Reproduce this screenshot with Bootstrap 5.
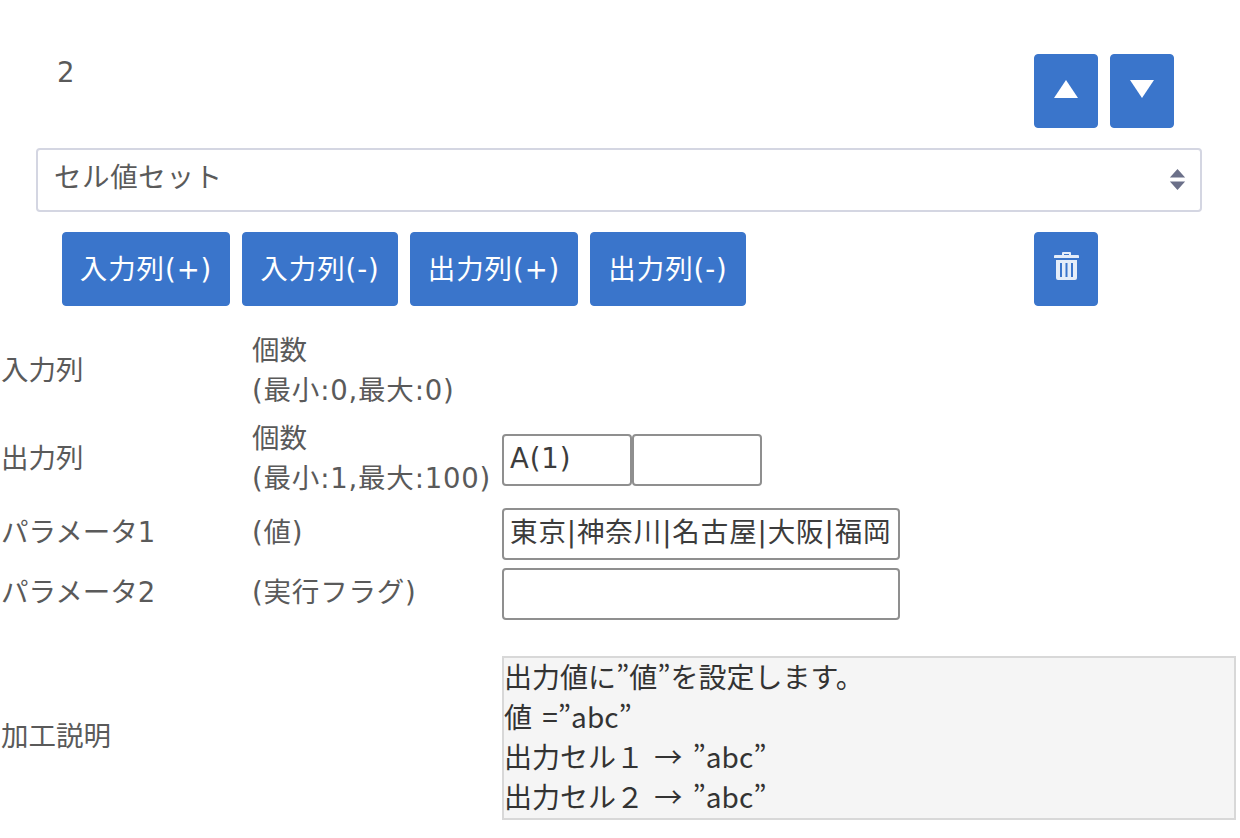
<!DOCTYPE html>
<html lang="ja">
<head>
<meta charset="utf-8">
<title>セル値セット</title>
<link href="https://cdn.jsdelivr.net/npm/bootstrap@5.3.0/dist/css/bootstrap.min.css" rel="stylesheet">
<style>
html,body{margin:0;background:#fff;overflow:hidden}
body{font-family:"DejaVu Sans","Noto Sans CJK JP",sans-serif;font-size:27.5px;line-height:40px;color:#5a5a5a;width:1240px;height:838px}
.sheet{padding-top:54px}
.blue-btn{background:#3a75cb;border:1px solid #3a75cb;color:#fff;border-radius:4px;font-size:27.5px;font-weight:400;letter-spacing:.9px;line-height:40px;height:74px;padding:0;display:flex;align-items:center;justify-content:center;white-space:nowrap}
.blue-btn:hover{background:#3a75cb;color:#fff;border-color:#3a75cb}
.sq-btn{width:64px;padding:0}
.lift-a{padding-bottom:4px}
.lift-b{padding-bottom:6px}
.top-row{padding-left:57px;height:74px;column-gap:962px}
.num{margin-top:-2px;width:15px}
.right-set{column-gap:12px}
.sel-wrap{padding:20px 38px 20px 36px}
.sel-box{height:64px;border:2px solid #d4d6e2;border-radius:4px;color:#5a5a5a;letter-spacing:.6px;padding:0 50px 6px 16px;background-color:#fff;display:flex;align-items:center;position:relative}
.sel-arrows{position:absolute;right:14px;top:19px}
.act-row{padding-left:62px;height:74px}
.act-left{width:972px;column-gap:12px}
.w-plus{width:168px}
.w-minus{width:156px}
.info{display:grid;grid-template-columns:250px 250px 738px;grid-template-rows:80px 80px 52px 52px 194px;padding-left:1px;margin-top:24px;row-gap:8px}
.info>.col-two{padding-left:1px}
.cap{display:flex;align-items:center}
.note{white-space:nowrap}
.wide-txt{letter-spacing:.8px}
.fields{display:flex;align-items:center;padding-left:1px}
.fields-low{align-items:flex-start;padding-top:16px}
.fields-nudge{margin-top:3px}
.fields-nudge2{margin-top:4px}
.fld{height:52px;border:2px solid #8f8f8f;border-radius:4px;color:#3c3c3c;letter-spacing:.9px;line-height:44px;padding:0 6px;background:#fff;white-space:nowrap;overflow:hidden}
.fld-s{width:130px}
.fld-l{width:398px}
.desc-box{width:734px;height:164px;margin-top:30px;margin-left:1px;background:#f5f5f5;border:2px solid #d8d8d8;color:#333;font-size:28px;line-height:40px;padding:0;word-spacing:4px;white-space:nowrap;font-family:"Noto Sans CJK JP",sans-serif}
.desc-lines{margin-top:-2px}
.gap-top{margin-top:26px}
</style>
</head>
<body>
<div class="sheet">
  <div class="top-row d-flex align-items-start">
    <div class="num">2</div>
    <div class="right-set d-flex">
      <button class="btn blue-btn sq-btn lift-a" aria-label="上へ"><svg width="24" height="18" viewBox="0 0 24 18"><path d="M12 0L24 18H0Z" fill="#fff"/></svg></button>
      <button class="btn blue-btn sq-btn lift-a" aria-label="下へ"><svg width="24" height="18" viewBox="0 0 24 18"><path d="M0 0H24L12 18Z" fill="#fff"/></svg></button>
    </div>
  </div>
  <div class="sel-wrap">
    <div class="sel-box"><span>セル値セット</span>
      <svg class="sel-arrows" width="17" height="21" viewBox="0 0 16 22"><path d="M8 0L16 9H0ZM0 13H16L8 22Z" fill="#6b7089"/></svg>
    </div>
  </div>
  <div class="act-row d-flex">
    <div class="act-left d-flex">
      <button class="btn blue-btn w-plus">入力列(+)</button>
      <button class="btn blue-btn w-minus">入力列(-)</button>
      <button class="btn blue-btn w-plus">出力列(+)</button>
      <button class="btn blue-btn w-minus">出力列(-)</button>
    </div>
    <button class="btn blue-btn sq-btn lift-b" aria-label="削除"><svg width="25" height="28" viewBox="0 0 25 28"><path d="M8 3V1q0-1 1-1h7q1 0 1 1v2h7q1 0 1 1v2H0V4q0-1 1-1ZM10 2v1h5V2ZM2 8h21v18q0 2-2 2H4q-2 0-2-2ZM6 11v14h2V11Zm5.500 0v14h2V11Zm5.500 0v14h2V11Z" fill="#e4edf9" fill-rule="evenodd"/></svg></button>
  </div>
  <div class="info">
    <div class="cap">入力列</div>
    <div class="note col-two">個数<br><span class="wide-txt">(最小:0,最大:0)</span></div>
    <div></div>
    <div class="cap">出力列</div>
    <div class="note col-two">個数<br><span class="wide-txt">(最小:1,最大:100)</span></div>
    <div class="fields fields-low"><div class="fld fld-s">A(1)</div><div class="fld fld-s"></div></div>
    <div class="cap">パラメータ1</div>
    <div class="cap wide-txt col-two">(値)</div>
    <div class="fields fields-nudge"><div class="fld fld-l">東京|神奈川|名古屋|大阪|福岡</div></div>
    <div class="cap">パラメータ2</div>
    <div class="cap wide-txt col-two">(実行フラグ)</div>
    <div class="fields fields-nudge2"><div class="fld fld-l"></div></div>
    <div class="cap gap-top">加工説明</div>
    <div class="gap-top"></div>
    <div class="desc-box"><div class="desc-lines">出力値に”値”を設定します。<br>値 =”abc”<br>出力セル１ → ”abc”<br>出力セル２ → ”abc”</div></div>
  </div>
</div>
<script src="https://cdn.jsdelivr.net/npm/bootstrap@5.3.0/dist/js/bootstrap.bundle.min.js"></script>
</body>
</html>
